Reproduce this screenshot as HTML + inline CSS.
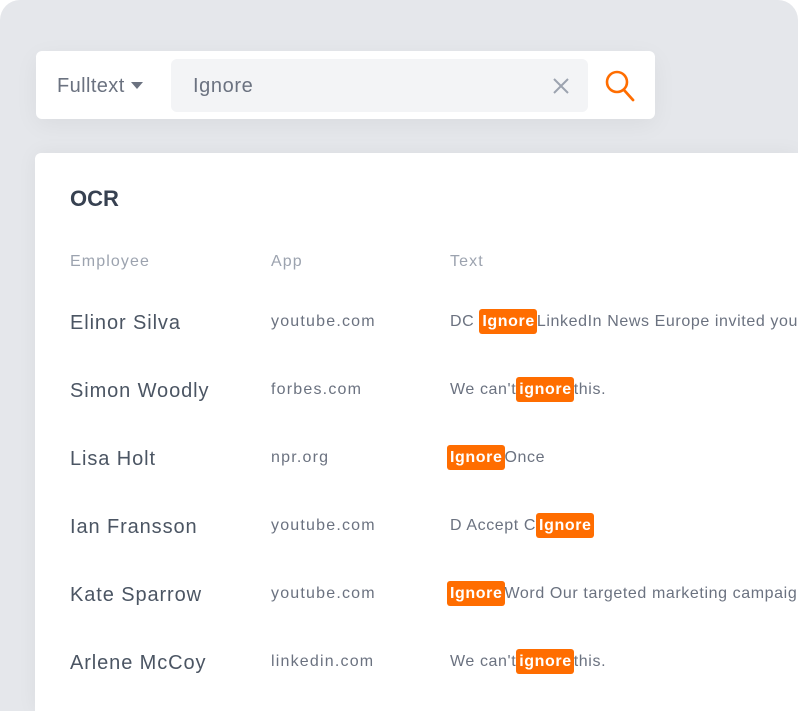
<!DOCTYPE html>
<html><head><style>
*{margin:0;padding:0;box-sizing:border-box}
html,body{width:798px;height:711px;overflow:hidden}
body{background:#fff;font-family:"Liberation Sans",sans-serif;position:relative}
.bg{position:absolute;left:0;top:0;width:798px;height:711px;background:#e5e7eb;border-radius:20px 20px 0 0}
.search{position:absolute;left:36px;top:51px;width:619px;height:68px;background:#fff;border-radius:6px;box-shadow:0 6px 24px rgba(0,0,0,.05)}
.ft{position:absolute;left:21px;top:24px;font-size:20px;color:#6b7280;letter-spacing:.4px}
.tri{display:inline-block;width:0;height:0;border-left:6px solid transparent;border-right:6px solid transparent;border-top:7px solid #6b7280;vertical-align:middle;margin-left:6px;margin-top:-3px}
.inp{position:absolute;left:135px;top:8px;width:417px;height:53px;background:#f3f4f6;border-radius:6px}
.inp span{position:absolute;left:22px;top:16px;font-size:20px;color:#6b7280;letter-spacing:.6px}
.card{position:absolute;left:35px;top:153px;width:763px;height:558px;background:#fff;border-radius:6px 0 0 0;box-shadow:0 0 20px rgba(0,0,0,.05)}
h1{position:absolute;left:35px;top:33px;font-size:22px;font-weight:bold;color:#374151}
.hd{position:absolute;top:100px;font-size:16px;color:#9ca3af;letter-spacing:1.1px}
.r{position:absolute;left:0;width:763px;white-space:nowrap;overflow:hidden;height:40px;top:0}
.n{position:absolute;left:35px;font-size:20px;color:#4b5563;top:9px;letter-spacing:.9px}
.a{position:absolute;left:236px;font-size:16px;color:#6b7280;top:10px;letter-spacing:1.2px}
.t{position:absolute;left:415px;font-size:16px;color:#6b7280;top:10px;letter-spacing:.6px}
.h{background:#ff6d00;color:#fff;font-weight:bold;border-radius:3px;padding:4px 2px 4px 3px;font-size:16px;letter-spacing:.6px}
</style></head><body>
<div class="bg"></div>
<div class="search">
<div class="ft">Fulltext<span class="tri"></span></div>
<div class="inp"><span>Ignore</span>
<svg style="position:absolute;left:381px;top:18px" width="18" height="18" viewBox="0 0 18 18"><path d="M2 2L16 16M16 2L2 16" stroke="#9ca3af" stroke-width="2"/></svg></div>
<svg style="position:absolute;left:568px;top:18px" width="32" height="34" viewBox="0 0 32 34"><circle cx="13" cy="13" r="10" fill="none" stroke="#ff6d00" stroke-width="2.6"/><path d="M20 21L29 31" stroke="#ff6d00" stroke-width="2.8" stroke-linecap="round"/></svg>
</div>
<div class="card">
<h1>OCR</h1>
<div class="hd" style="left:35px">Employee</div>
<div class="hd" style="left:236px">App</div>
<div class="hd" style="left:415px">Text</div>
<div class="r" style="top:150px"><div class="n">Elinor Silva</div><div class="a">youtube.com</div><div class="t">DC <span class="h">Ignore</span>LinkedIn News Europe invited you</div></div>
<div class="r" style="top:218px"><div class="n">Simon Woodly</div><div class="a">forbes.com</div><div class="t">We can't<span class="h">ignore</span>this.</div></div>
<div class="r" style="top:286px"><div class="n">Lisa Holt</div><div class="a">npr.org</div><div class="t" style="left:412px"><span class="h">Ignore</span>Once</div></div>
<div class="r" style="top:354px"><div class="n">Ian Fransson</div><div class="a">youtube.com</div><div class="t">D Accept C<span class="h">Ignore</span></div></div>
<div class="r" style="top:422px"><div class="n">Kate Sparrow</div><div class="a">youtube.com</div><div class="t" style="left:412px"><span class="h">Ignore</span>Word Our targeted marketing campaign</div></div>
<div class="r" style="top:490px"><div class="n">Arlene McCoy</div><div class="a">linkedin.com</div><div class="t">We can't<span class="h">ignore</span>this.</div></div>
</div>
</body></html>
